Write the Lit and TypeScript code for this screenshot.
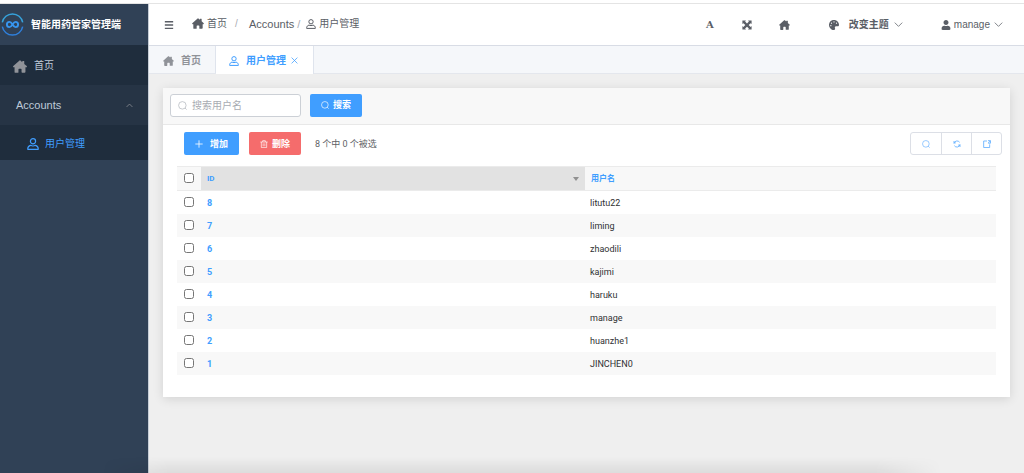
import { LitElement, html, css, svg } from "lit";
import { customElement, state } from "lit/decorators.js";

const HOME = "M13.100 1.600a1.400 1.400 0 0 1 1.800 0l3.600 3.200V3.200a.8.8 0 0 1 .8-.8h2.400a.8.8 0 0 1 .8.8v5.200l4.900 4.300c.9.900.5 2.300-.9 2.300h-1.600v9.200a1.700 1.700 0 0 1-1.700 1.700h-4.900a1.200 1.200 0 0 1-1.200-1.200v-5.300a1.200 1.200 0 0 0-1.200-1.200h-3.800a1.200 1.200 0 0 0-1.200 1.200v5.300A1.200 1.200 0 0 1 9.700 26H4.800a1.700 1.700 0 0 1-1.700-1.700V15H1.500C.1 15-.3 13.600.6 12.700z";
const PALETTE = "M204.3 5C104.9 24.4 24.8 104.3 5.2 203.4c-37 187 131.7 326.4 258.8 306.7 41.2-6.4 61.4-54.6 42.5-91.7-23.1-45.4 9.9-98.4 60.9-98.4h79.7c35.8 0 64.8-29.6 64.9-65.3C511.5 97.1 368.1-26.9 204.3 5zM96 320c-17.7 0-32-14.3-32-32s14.3-32 32-32 32 14.3 32 32-14.3 32-32 32zm32-128c-17.7 0-32-14.3-32-32s14.3-32 32-32 32 14.3 32 32-14.3 32-32 32zm128-64c-17.7 0-32-14.3-32-32s14.3-32 32-32 32 14.3 32 32-14.3 32-32 32zm128 64c-17.7 0-32-14.3-32-32s14.3-32 32-32 32 14.3 32 32-14.3 32-32 32z";
const USER = "M224 256c70.7 0 128-57.3 128-128S294.7 0 224 0 96 57.3 96 128s57.3 128 128 128zm89.6 32h-16.7c-22.2 10.2-46.9 16-72.9 16s-50.6-5.8-72.9-16h-16.7C60.2 288 0 348.2 0 422.4V464c0 26.5 21.5 48 48 48h352c26.5 0 48-21.5 48-48v-41.6c0-74.2-60.2-134.4-134.4-134.4z";

const fill = (box: string, w: number, h: number, d: string) => html`
  <svg width=${w} height=${h} viewBox=${box} fill="currentColor" aria-hidden="true"><path d=${d} /></svg>`;

const line = (size: number, width: number, body: unknown) => html`
  <svg width=${size} height=${size} viewBox="0 0 12 12" fill="none" stroke="currentColor"
    stroke-width=${width} stroke-linejoin="round" aria-hidden="true">${body}</svg>`;

const home = (w: number, h: number) => fill("0 1 28 25", w, h, HOME);
const person = (size: number) => line(size, 1.2, svg`
  <circle cx="6" cy="3.3" r="2.6" />
  <path d="M3.6 7.3C1.9 7.8.8 9 .8 10.4v.9h10.4v-.9c0-1.400-1.100-2.600-2.800-3.100-1.400.8-3.400.8-4.800 0z" />`);
const search = (size: number) => line(size, 1, svg`
  <circle cx="5.800" cy="5.800" r="5" /><path d="M9.300 9.300l2.200 2.200" />`);
const chevron = (d: string) => line(9, 1, svg`<path d=${d} />`);
const DOWN = "M1 3.500l5 5 5-5";
const UP = "M1 8.500l5-5 5 5";

interface User { id: number; name: string; }

const USERS: User[] = [
  { id: 8, name: "litutu22" },
  { id: 7, name: "liming" },
  { id: 6, name: "zhaodili" },
  { id: 5, name: "kajimi" },
  { id: 4, name: "haruku" },
  { id: 3, name: "manage" },
  { id: 2, name: "huanzhe1" },
  { id: 1, name: "JINCHEN0" },
];

const reset = css`
  :host { box-sizing: border-box; }
  *, *::before, *::after { box-sizing: border-box; }
  svg { display: block; flex: none; }
  a { color: inherit; text-decoration: none; }
  button { margin: 0; padding: 0; border: 0; background: none; color: inherit; font: inherit; cursor: pointer; }
`;

@customElement("side-menu")
class SideMenu extends LitElement {
  static styles = [reset, css`
    :host { display: block; background: #304156; border-right: 1px solid #c6cdd6; color: #bfcbd9; }
    .brand { display: flex; align-items: center; gap: 7px; height: 41px; padding-left: 1px; color: #fff; font-weight: 700; white-space: nowrap; }
    .item { display: flex; align-items: center; width: 100%; height: 40px; text-align: left; white-space: nowrap; }
    .home { gap: 7px; padding: 2px 0 0 13px; background: #1f2d3d; }
    .home svg { color: #909399; }
    .group { justify-content: space-between; padding: 0 15px 0 16px; background: #263445; font-size: 11px; }
    .group svg { color: #909399; }
    .child { gap: 6px; height: 35px; padding: 2px 0 0 27px; background: #1f2d3d; color: #409eff; }
  `];

  render() {
    return html`
      <div class="brand">
        <svg width="23" height="23" viewBox="0 0 23 23" fill="none" aria-hidden="true">
          <path d="M1.300 9.300A10.400 10.400 0 0 1 21.700 9.300" stroke="#36a3dc" stroke-width="1.500" />
          <path d="M1.300 13.700A10.400 10.400 0 0 0 21.700 13.700" stroke="#2f80dd" stroke-width="1.500" />
          <path d="M11.500 11.500C10.400 9.700 9.600 8.900 8.500 8.900a2.600 2.600 0 0 0 0 5.200c1.100 0 1.900-.9 3-2.600s1.900-2.600 3-2.600a2.600 2.600 0 0 1 0 5.200c-1.100 0-1.900-.8-3-2.600z"
            stroke="#3796f0" stroke-width="1.900" />
        </svg>
        <span>智能用药管家管理端</span>
      </div>
      <nav>
        <a class="item home" href="#home">${home(14, 13)}<span>首页</span></a>
        <button class="item group" aria-expanded="true">Accounts${line(7, 1.3, svg`<path d=${UP} />`)}</button>
        <a class="item child" href="#users">${person(12)}<span>用户管理</span></a>
      </nav>`;
  }
}

@customElement("top-bar")
class TopBar extends LitElement {
  static styles = [reset, css`
    :host { display: flex; align-items: center; justify-content: space-between; height: 42px; padding: 0 21px 0 15px; background: #fff; border-bottom: 1px solid #d8dce5; color: #5a5e66; white-space: nowrap; }
    .left, .crumbs, .crumb, .right, .tool { display: flex; align-items: center; }
    .left { gap: 18px; }
    .crumbs { margin: 0; padding: 0 0 2px; list-style: none; }
    .crumb { gap: 3px; }
    .latin { font-size: 11px; padding-left: 10px; }
    .sep { width: 4px; margin: 0 0 0 5px; color: #a8abb2; }
    .sep.near { margin: 0 5px 0 0; }
    .tools { display: flex; align-items: center; gap: 27px; margin-right: 39px; }
    .glyph { width: 10px; font: 700 10px "DejaVu Serif", serif; }
    .tool { gap: 5px; }
    .theme { margin-right: 38px; font-weight: 700; }
    .theme span { margin-left: 5px; }
    .account { gap: 3px; }
    .account span { margin-right: 1px; }
  `];

  render() {
    return html`
      <div class="left">
        <button aria-label="折叠菜单">${line(10, 1.7, svg`<path d="M1 2h10M1 6h10M1 10h10" />`)}</button>
        <ol class="crumbs">
          <li class="crumb">${home(12, 11)}<span>首页</span><span class="sep">/</span></li>
          <li class="crumb latin">Accounts<span class="sep near">/</span></li>
          <li class="crumb">${person(10)}<span>用户管理</span></li>
        </ol>
      </div>
      <div class="right">
        <div class="tools">
          <button class="glyph" aria-label="字体">A</button>
          <button aria-label="全屏">
            <svg width="10" height="10" viewBox="0 0 10 10" fill="currentColor" aria-hidden="true">
              <path d="M.4.5h3.600L3.100 1.500 5 3.400l1.900-1.900L6 .5h3.600v3.600l-1-.9L6.700 5l1.900 1.900 1-.9v3.600H6l.9-1L5 6.700 3.100 8.600l.9 1H.4V6l1 .9L3.300 5 1.400 3.200l-1 .9z" />
            </svg>
          </button>
          <button aria-label="首页">${home(11, 10)}</button>
        </div>
        <button class="tool theme">${fill("0 0 512 512", 10, 10, PALETTE)}<span>改变主题</span>${chevron(DOWN)}</button>
        <button class="tool account">${fill("0 0 448 512", 10, 10, USER)}<span>manage</span>${chevron(DOWN)}</button>
      </div>`;
  }
}

@customElement("page-tabs")
class PageTabs extends LitElement {
  static styles = [reset, css`
    :host { display: flex; height: 28px; background: #f5f7fa; border-bottom: 1px solid #e4e7ed; color: #909399; font-weight: 700; white-space: nowrap; }
    .tab { display: flex; align-items: center; height: 27px; gap: 7px; padding: 2px 14px 0; border-right: 1px solid #dfe4ed; }
    .active { height: 28px; padding: 1px 15px 0 13px; background: #fff; color: #409eff; }
    .link { display: flex; align-items: center; gap: 7px; }
    .close { margin-left: -2px; }
  `];

  render() {
    return html`
      <div class="tab"><a class="link" href="#home">${home(11, 10)}<span>首页</span></a></div>
      <div class="tab active">
        <a class="link" href="#users">${person(10)}<span>用户管理</span></a>
        <button class="close" aria-label="关闭">${line(7, 1.3, svg`<path d="M1 1l10 10M11 1L1 11" />`)}</button>
      </div>`;
  }
}

@customElement("user-panel")
class UserPanel extends LitElement {
  @state() private picked = new Set<number>();

  static styles = [reset, css`
    :host { display: block; background: #fff; box-shadow: 0 2px 10px rgba(0, 0, 0, 0.12); font-family: Roboto, "Noto Sans CJK SC", sans-serif; font-size: 9px; color: #303133; }
    .filter { display: flex; align-items: center; gap: 9px; height: 37px; padding: 0 7px 2px; background: #f8f8f8; border-bottom: 1px solid #e8e8e8; }
    .field { display: flex; align-items: center; gap: 5px; width: 131px; height: 23px; padding: 0 7px; background: #fff; border: 1px solid #ccd0d6; border-radius: 3px; color: #b4b8bf; }
    .input { flex: 1; min-width: 0; height: 21px; padding: 0; border: 0; outline: 0; background: none; font: inherit; font-size: 10px; color: #606266; }
    .input::placeholder { color: #a8abb2; opacity: 1; }
    .btn { display: flex; align-items: center; justify-content: center; gap: 4px; height: 23px; padding: 0 11px; border-radius: 2px; background: #409eff; color: #fff; font-weight: 700; white-space: nowrap; }
    .add { gap: 7px; }
    .danger { background: #f56c6c; }
    .actions { display: flex; align-items: center; gap: 10px; height: 23px; margin: 7px 8px 11px 21px; }
    .count { margin-left: 4px; color: #606266; }
    .group { display: flex; height: 23px; margin-left: auto; border: 1px solid #dcdfe6; border-radius: 3px; }
    .icon { display: flex; align-items: center; justify-content: center; width: 30px; color: #66b1ff; }
    .icon + .icon { border-left: 1px solid #dcdfe6; }
    .wrap { padding: 0 14px 22px; }
    .table { width: 100%; border-collapse: separate; border-spacing: 0; table-layout: fixed; }
    .check { width: 24px; text-align: left; }
    .id { width: 384px; }
    th, td { height: 23px; padding: 0 6px; text-align: left; line-height: 12px; }
    thead th { height: 25px; border-top: 1px solid #ebebeb; border-bottom: 1px solid #ebebeb; background: #f8f8f8; font-size: 8px; color: #409eff; }
    thead .id { background: #e2e2e2; }
    tbody tr:nth-child(even) { background: #f8f8f8; }
    td { color: #303133; }
    td.name { padding-left: 5px; }
    .key { color: #409eff; font-weight: 700; }
    .sort { display: flex; align-items: center; justify-content: space-between; }
    .box { display: block; width: 10px; height: 10px; margin: 0 0 2px 1px; }
  `];

  private toggle(id: number) {
    const next = new Set(this.picked);
    if (!next.delete(id)) next.add(id);
    this.picked = next;
  }

  private toggleAll() {
    this.picked = this.picked.size === USERS.length ? new Set() : new Set(USERS.map((u) => u.id));
  }

  render() {
    return html`
      <form class="filter" @submit=${(e: Event) => e.preventDefault()}>
        <label class="field">${search(9)}<input class="input" type="text" placeholder="搜索用户名" aria-label="搜索用户名" /></label>
        <button class="btn" type="submit">${search(8)}<span>搜索</span></button>
      </form>
      <div class="actions">
        <button class="btn add">${line(8, 1.2, svg`<path d="M6 .5v11M.5 6h11" />`)}<span>增加</span></button>
        <button class="btn danger">${line(8, 1, svg`<path d="M.5 3h11M4 3V1h4v2M2 3v8.400h8V3M4.700 5v4.500M7.300 5v4.500" />`)}<span>删除</span></button>
        <span class="count">${USERS.length} 个中 ${this.picked.size} 个被选</span>
        <div class="group">
          <button class="icon" aria-label="搜索">${search(8)}</button>
          <button class="icon" aria-label="刷新">${line(8, 1.3, svg`
            <path d="M1.300 5.500A4.800 4.800 0 0 1 10 3.500M10.700 6.500A4.800 4.800 0 0 1 2 8.500M1.500 1.500v2.800h2.800M10.500 10.500V7.700H7.700" />`)}</button>
          <button class="icon" aria-label="导出">${line(8, 1.3, svg`
            <path d="M6 1.500H1v9.800h9V6.500M7.500 1h3.800v3.800H7.800M11 1.200L7.800 4.600" />`)}</button>
        </div>
      </div>
      <div class="wrap">
        <table class="table">
          <thead>
            <tr>
              <th class="check"><input class="box" type="checkbox" aria-label="全选"
                .checked=${this.picked.size === USERS.length} @change=${this.toggleAll} /></th>
              <th class="id"><div class="sort"><a href="#sort-id">ID</a>
                <svg width="6" height="4" viewBox="0 0 6 4" fill="#909090" aria-hidden="true"><path d="M0 0h6L3 4z" /></svg></div></th>
              <th><a href="#sort-name">用户名</a></th>
            </tr>
          </thead>
          <tbody>
            ${USERS.map((u) => html`
              <tr>
                <td class="check"><input class="box" type="checkbox" aria-label=${u.name}
                  .checked=${this.picked.has(u.id)} @change=${() => this.toggle(u.id)} /></td>
                <td><a class="key" href="#user-${u.id}">${u.id}</a></td>
                <td class="name">${u.name}</td>
              </tr>`)}
          </tbody>
        </table>
      </div>`;
  }
}

@customElement("app-root")
class AppRoot extends LitElement {
  static styles = [reset, css`
    :host { display: grid; grid-template-columns: 149px 1fr; grid-template-rows: auto 1fr; min-height: 100vh; background: #efefef; font-family: "Liberation Sans", "Noto Sans CJK SC", sans-serif; font-size: 10px; line-height: 14px; }
    .strip { grid-column: 1 / -1; height: 4px; background: #fff; border-bottom: 1px solid #e4e4e4; }
    .main { min-width: 0; }
    .content { padding: 14px; }
    .shade { position: fixed; bottom: 0; left: 10%; right: 8%; height: 16px; pointer-events: none;
      background: linear-gradient(transparent, rgba(0, 0, 0, 0.08));
      mask-image: linear-gradient(90deg, transparent, #000 8%, #000 92%, transparent); }
  `];

  render() {
    return html`
      <div class="strip"></div>
      <side-menu></side-menu>
      <div class="main">
        <top-bar></top-bar>
        <page-tabs></page-tabs>
        <main class="content"><user-panel></user-panel></main>
      </div>
      <div class="shade"></div>`;
  }
}
